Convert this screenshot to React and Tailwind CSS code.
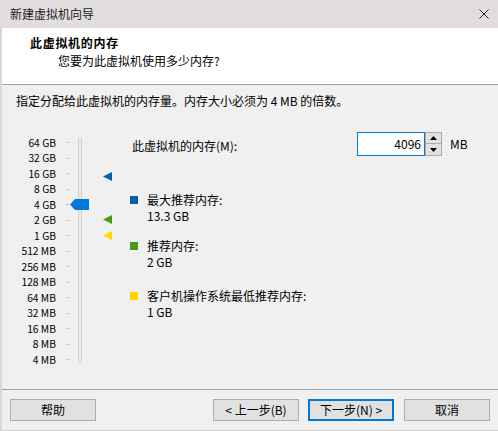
import React from 'react';

const levels = ['64 GB', '32 GB', '16 GB', '8 GB', '4 GB', '2 GB', '1 GB', '512 MB', '256 MB', '128 MB', '64 MB', '32 MB', '16 MB', '8 MB', '4 MB'];

function Marker({ color, className }) {
    return (
        <svg width="9" height="9" viewBox="0 0 9 9" className={className}>
            <polygon points="0,4.5 9,0 9,9" fill={color} />
        </svg>
    );
}

function Legend({ color, title, value, className }) {
    return (
        <div className={className}>
            <div className="flex items-center h-[16px]">
                <div className={`w-[8px] h-[8px] ${color}`} />
                <span className="ml-[9px]">{title}</span>
            </div>
            <div className="pl-[17px] h-[16px] leading-[16px]">{value}</div>
        </div>
    );
}

function Button({ children, primary }) {
    return (
        <button
            className={`h-[22px] w-[86px] bg-[#e1e1e1] text-[12px] leading-none text-black ${primary ? 'border-2 border-[#0078d7]' : 'border border-[#adadad]'}`}
        >
            {children}
        </button>
    );
}

export default function App() {
    return (
        <div className="w-[498px] h-[431px] bg-[#f0f0f0] flex flex-col text-[12px] leading-[16px] text-black font-['Noto_Sans_CJK_SC',sans-serif] border-b border-[#d4d4d4] overflow-hidden">
            {/* title bar */}
            <div className="h-[28px] shrink-0 bg-[#e2dede] flex items-center justify-between pl-[10px] pr-[9px]">
                <span className="text-[#1a1a1a]">新建虚拟机向导</span>
                <svg width="10" height="10" viewBox="0 0 10 10" className="mt-[-1px]">
                    <path d="M0.5 0.5 L9.5 9.5 M9.5 0.5 L0.5 9.5" stroke="#222" strokeWidth="1" />
                </svg>
            </div>

            <div className="flex-1 flex flex-col border-l-2 border-[#d8d8d8]">
                {/* header */}
                <div className="h-[57px] shrink-0 bg-white border-b border-[#a0a0a0] pt-[7px]">
                    <div className="pl-[28px] font-bold tracking-[0.7px]">此虚拟机的内存</div>
                    <div className="pl-[56px] mt-[2px]">您要为此虚拟机使用多少内存?</div>
                </div>

                {/* body */}
                <div className="h-[304px] shrink-0 pt-[8px] pl-[14px]">
                    <div>指定分配给此虚拟机的内存量。内存大小必须为 4 MB 的倍数。</div>

                    <div className="flex mt-[23px] -ml-[14px]">
                        {/* slider */}
                        <div className="relative w-[128px] pt-[3px] flex">
                            <div className="flex flex-col">
                                {levels.map((l) => (
                                    <div key={l} className="h-[15.5px] flex items-center">
                                        <span className="w-[54px] text-right text-[10.3px] leading-none">{l}</span>
                                        <span className="ml-[10px] w-[3px] h-px bg-[#c4c4c4]" />
                                    </div>
                                ))}
                            </div>
                            <div className="ml-[9px] mt-[3px] w-[4px] h-[225px] bg-[#e8e8e8] border-x border-[#d2d2d2]" />

                            <svg width="19" height="11" viewBox="0 0 19 11" className="absolute left-[68px] top-[67px]">
                                <polygon points="0,5.5 5,0 19,0 19,11 5,11" fill="#0078d7" />
                            </svg>
                            <Marker color="#0063b1" className="absolute left-[101px] top-[40px]" />
                            <Marker color="#4c9a0e" className="absolute left-[101px] top-[83px]" />
                            <Marker color="#ffd800" className="absolute left-[101px] top-[99px]" />
                        </div>

                        {/* settings */}
                        <div className="flex flex-col">
                            <div className="flex items-center h-[24px]">
                                <span className="pl-[2px] w-[227px] mt-[3px]">此虚拟机的内存(M):</span>
                                <div className="w-[68px] h-[24px] bg-white border border-[#0078d7] flex items-center justify-end pr-[3px]">
                                    4096
                                </div>
                                <div className="w-[17px] h-[24px] flex flex-col">
                                    <div className="h-[12px] bg-[#e1e1e1] border border-[#adadad] flex items-center justify-center">
                                        <svg width="7" height="4" viewBox="0 0 7 4"><polygon points="3.5,0 7,4 0,4" fill="#000" /></svg>
                                    </div>
                                    <div className="h-[12px] bg-[#e1e1e1] border border-t-0 border-[#adadad] flex items-center justify-center">
                                        <svg width="7" height="4" viewBox="0 0 7 4"><polygon points="0,0 7,0 3.5,4" fill="#000" /></svg>
                                    </div>
                                </div>
                                <span className="ml-[8px]">MB</span>
                            </div>

                            <Legend className="mt-[36px]" color="bg-[#0063b1]" title="最大推荐内存:" value="13.3 GB" />
                            <Legend className="mt-[14px]" color="bg-[#4c9a0e]" title="推荐内存:" value="2 GB" />
                            <Legend className="mt-[18px]" color="bg-[#ffd800]" title="客户机操作系统最低推荐内存:" value="1 GB" />
                        </div>
                    </div>
                </div>

                <div className="h-px shrink-0 bg-[#a0a0a0]" />

                {/* footer */}
                <div className="flex-1 flex items-start pt-[9px] pl-[8px] pr-[8px]">
                    <Button>帮助</Button>
                    <div className="flex-1" />
                    <Button>&lt; 上一步(B)</Button>
                    <div className="ml-[9px]">
                        <Button primary>下一步(N) &gt;</Button>
                    </div>
                    <div className="ml-[10px]">
                        <Button>取消</Button>
                    </div>
                </div>
            </div>
        </div>
    );
}
